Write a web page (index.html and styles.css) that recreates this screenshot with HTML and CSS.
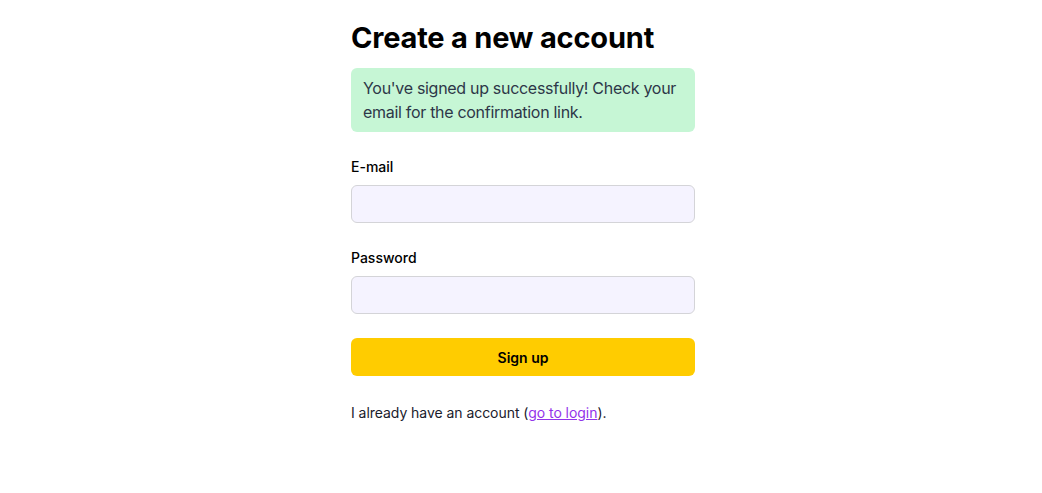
FILE: index.html
```html
<!DOCTYPE html>
<html>
<head>
<meta charset="utf-8">
<link rel="stylesheet" href="styles.css">
</head>
<body>
<main class="page">
  <h1 class="title">Create a new account</h1>
  <div class="alert">You've signed up successfully! Check your email for the confirmation link.</div>
  <form class="form">
    <div class="field">
      <label class="label" for="email">E-mail</label>
      <input class="input" id="email" type="email">
    </div>
    <div class="field">
      <label class="label" for="password">Password</label>
      <input class="input" id="password" type="password">
    </div>
    <button class="button" type="button">Sign up</button>
  </form>
  <p class="footer">I already have an account (<a class="link" href="#">go to login</a>).</p>
</main>
</body>
</html>
```
FILE: styles.css
```css
html, body {
  margin: 0;
  padding: 0;
  background: #ffffff;
}
body {
  font-family: Inter, "Noto Sans", sans-serif;
  color: #000;
}
.page {
  width: 344px;
  margin: 0 auto;
  padding: 20px 0 0 4px;
  display: flex;
  flex-direction: column;
}
.title {
  margin: 0;
  font-size: 29px;
  line-height: 36px;
  font-weight: 700;
  letter-spacing: -0.2px;
}
.alert {
  margin-top: 12px;
  background: #c6f6d5;
  border-radius: 6px;
  padding: 8px 12px;
  font-size: 16px;
  line-height: 24px;
  letter-spacing: -0.3px;
  color: #2d3748;
}
.form {
  margin-top: 25px;
  display: flex;
  flex-direction: column;
}
.field {
  display: flex;
  flex-direction: column;
  gap: 8px;
  margin-bottom: 25px;
}
.field + .field {
  margin-bottom: 24px;
}
.label {
  font-size: 14px;
  line-height: 20px;
  font-weight: 500;
}
.input {
  box-sizing: border-box;
  height: 38px;
  width: 100%;
  background: #f5f3ff;
  border: 1px solid #d4d4d8;
  border-radius: 6px;
  font-family: inherit;
  font-size: 14px;
  padding: 0 10px;
}
.button {
  height: 38px;
  width: 100%;
  background: #ffcc00;
  border: none;
  border-radius: 6px;
  font-family: inherit;
  font-size: 14px;
  font-weight: 600;
  color: #000;
}
.footer {
  margin: 27px 0 0;
  font-size: 14px;
  line-height: 20px;
  letter-spacing: -0.05px;
  color: #1a202c;
}
.link {
  color: #9333ea;
  text-decoration: underline;
}
```
